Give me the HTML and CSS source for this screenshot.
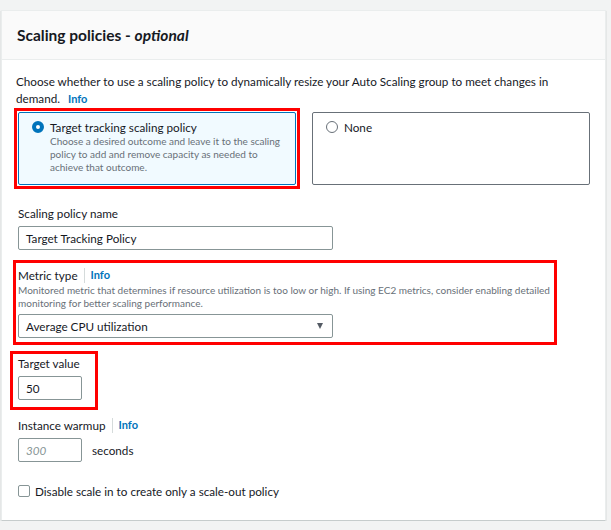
FILE: index.html
```html
<!DOCTYPE html>
<html lang="en">
<head>
<meta charset="utf-8">
<title>Scaling policies</title>
<link rel="stylesheet" href="styles.css">
</head>
<body>
<section class="card">
  <header class="card-header">
    <h2 class="card-title">Scaling policies - <em>optional</em></h2>
  </header>
  <div class="card-body">
    <p class="intro">Choose whether to use a scaling policy to dynamically resize your Auto Scaling group to meet changes in demand.<a class="info info-inline" href="#">Info</a></p>

    <div class="tiles">
      <div class="mark mark-tile">
        <label class="tile tile-selected">
          <span class="radio radio-on"></span>
          <span class="tile-text">
            <span class="tile-title">Target tracking scaling policy</span>
            <span class="tile-desc">Choose a desired outcome and leave it to the scaling policy to add and remove capacity as needed to achieve that outcome.</span>
          </span>
        </label>
      </div>
      <label class="tile">
        <span class="radio"></span>
        <span class="tile-text">
          <span class="tile-title">None</span>
        </span>
      </label>
    </div>

    <div class="field field-name">
      <div class="label">Scaling policy name</div>
      <div class="input input-wide">Target Tracking Policy</div>
    </div>

    <div class="mark mark-metric">
      <div class="field field-flush">
        <div class="label label-tight">Metric type <span class="sep"></span><a class="info" href="#">Info</a></div>
        <div class="help">Monitored metric that determines if resource utilization is too low or high. If using EC2 metrics, consider enabling detailed monitoring for better scaling performance.</div>
        <div class="input input-wide select">Average CPU utilization<span class="caret"></span></div>
      </div>
    </div>

    <div class="mark mark-target">
      <div class="field field-flush">
        <div class="label">Target value</div>
        <div class="input input-small">50</div>
      </div>
    </div>

    <div class="field field-warmup">
      <div class="label">Instance warmup <span class="sep"></span><a class="info" href="#">Info</a></div>
      <div class="row">
        <div class="input input-small placeholder">300</div>
        <span class="unit">seconds</span>
      </div>
    </div>

    <label class="check">
      <span class="box"></span>
      <span>Disable scale in to create only a scale-out policy</span>
    </label>
  </div>
</section>
</body>
</html>
```

FILE: styles.css
```css
* { box-sizing: border-box; }

body {
  margin: 0;
  background: #f2f3f3;
  font-family: "Lato", "Open Sans", sans-serif;
  color: #16191f;
  font-size: 11.7px;
}

.card {
  margin: 10px 5px 0 1px;
  height: 511px;
  background: #fff;
  border: 1px solid #eaeded;
  border-bottom: 1px solid #c6cccc;
  box-shadow: 0 1px 1px 0 rgba(0, 28, 36, 0.3);
}

.card-header {
  height: 49px;
  display: flex;
  align-items: center;
  padding: 0 15px;
  background: #fafafa;
  border-bottom: 1px solid #eaeded;
}

.card-title {
  margin: 0;
  font-size: 15.5px;
  font-weight: 700;
}

.card-title em { font-weight: 700; }

.card-body {
  padding: 13px 14px 0 14px;
}

.intro {
  margin: 0;
  max-width: 560px;
  line-height: 17px;
  font-size: 11.7px;
}

.info {
  color: #0073bb;
  font-weight: 700;
  text-decoration: none;
  font-size: 11px;
}

.info-inline {
  display: inline-block;
  margin-left: 8px;
}

.tiles {
  display: flex;
  gap: 16px;
  margin-top: 5px;
  padding-left: 2px;
}

.mark {
  outline: 3px solid #ff0000;
}

.mark-tile { outline-offset: 1px; }

.tile {
  width: 278px;
  height: 73px;
  display: flex;
  gap: 6px;
  padding: 6px 10px 6px 13px;
  border: 1px solid #687078;
  border-radius: 2px;
  background: #fff;
}

.tile-selected {
  border-color: #0073bb;
  background: #f1faff;
}

.radio {
  flex: none;
  width: 12px;
  height: 12px;
  margin-top: 2px;
  border-radius: 50%;
  border: 1px solid #687078;
  background: #fff;
}

.radio-on {
  border: 4px solid #0073bb;
}

.tile-text {
  display: flex;
  flex-direction: column;
}

.tile-title {
  font-size: 11.7px;
  line-height: 16px;
}

.tile-desc {
  font-size: 10px;
  line-height: 13px;
  color: #687078;
}

.field {
  display: flex;
  flex-direction: column;
  padding-left: 2px;
}

.field-flush { padding-left: 0; }

.field-name { margin-top: 20px; }

.label {
  display: flex;
  align-items: center;
  font-size: 11.7px;
  line-height: 16px;
  margin-bottom: 5px;
}

.label-tight { margin-bottom: 1px; }

.sep {
  display: inline-block;
  width: 1px;
  height: 15px;
  background: #d5dbdb;
  margin: 0 6px 0 6px;
}

.help {
  font-size: 10px;
  line-height: 13px;
  color: #687078;
  margin-bottom: 4px;
}

.input {
  height: 24px;
  display: flex;
  align-items: center;
  padding: 0 7px;
  border: 1px solid #879596;
  border-radius: 2px;
  font-size: 11.7px;
  background: #fff;
}

.input-wide { width: 315px; }
.input-small { width: 64px; }

.select {
  justify-content: space-between;
}

.caret {
  width: 0;
  height: 0;
  border-left: 3.5px solid transparent;
  border-right: 3.5px solid transparent;
  border-top: 6px solid #545b64;
  margin-right: 2px;
}

.mark-metric {
  margin-top: 14px;
  margin-left: 1px;
  width: 536px;
  padding: 3px 0 3px 1px;
  outline-offset: 1px;
}

.mark-target {
  margin-top: 13px;
  margin-left: -3px;
  width: 82px;
  padding: 1px 0 7px 5px;
}

.field-warmup { margin-top: 10px; }

.row {
  display: flex;
  align-items: center;
  gap: 10px;
}

.placeholder {
  font-style: italic;
  color: #879596;
}

.unit { font-size: 11.7px; }

.check {
  display: flex;
  align-items: center;
  gap: 5px;
  margin-top: 21px;
  padding-left: 2px;
  font-size: 11.7px;
  line-height: 16px;
}

.box {
  width: 12px;
  height: 12px;
  border: 1px solid #879596;
  border-radius: 2px;
  background: #fff;
}
```
